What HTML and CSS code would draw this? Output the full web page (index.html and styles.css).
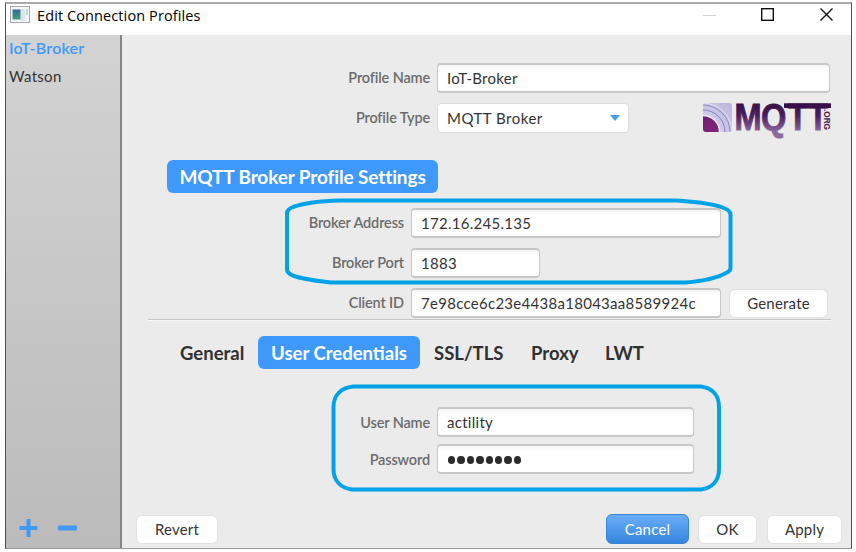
FILE: index.html
```html
<!DOCTYPE html>
<html lang="en">
<head>
<meta charset="utf-8">
<title>Edit Connection Profiles</title>
<link rel="stylesheet" href="styles.css">
</head>
<body>
<div class="window">
  <header class="titlebar">
    <svg class="app-icon" width="20" height="17" viewBox="0 0 20 17">
      <defs><linearGradient id="pane" x1="0" y1="0" x2="0" y2="1"><stop offset="0" stop-color="#35679c"/><stop offset="1" stop-color="#43a079"/></linearGradient></defs>
      <rect x=".5" y=".5" width="19" height="16" fill="#f3f5f7" stroke="#a5a9ad"/>
      <rect x="2.5" y="3.5" width="8" height="10" fill="url(#pane)"/>
      <rect x="11" y="3" width="4" height="12" fill="#dce3ec"/>
      <rect x="16" y="3" width="2" height="6" fill="#b8dbcf"/>
    </svg>
    <h1 class="title">Edit Connection Profiles</h1>
    <svg class="controls" width="132" height="16" viewBox="0 0 132 16" fill="none">
      <path d="M0 8.500h13" stroke="#d2d2d2"/>
      <rect x="58.700" y="1.700" width="11.600" height="11.600" stroke="#111" stroke-width="1.400"/>
      <path d="M117.500 1.500l12 12m0-12l-12 12" stroke="#111" stroke-width="1.400"/>
    </svg>
  </header>
  <div class="body">
    <aside class="sidebar">
      <div class="profile selected">IoT-Broker</div>
      <div class="profile watson">Watson</div>
      <svg class="tools" width="60" height="20" viewBox="0 0 60 20" fill="#3f98fa">
        <path d="M7.500 1h4v7h7v4h-7v7h-4v-7h-7v-4h7z"/><rect x="39" y="7.500" width="19" height="5" rx="1"/>
      </svg>
    </aside>
    <main class="pane">
      <div class="row name-row"><label class="label">Profile Name</label><div class="field">IoT-Broker</div></div>
      <div class="row type-row"><label class="label">Profile Type</label><div class="select"><span class="broker-type">MQTT Broker</span><i class="caret"></i></div>
        <svg class="logo" width="130" height="33" viewBox="0 0 130 33">
          <defs>
            <linearGradient id="ink" gradientUnits="userSpaceOnUse" x1="0" y1="2" x2="0" y2="31"><stop offset="0" stop-color="#361047"/><stop offset=".45" stop-color="#4b1e60"/><stop offset="1" stop-color="#8c6aa0"/></linearGradient>
            <linearGradient id="tile" x1="1" y1="0" x2="0" y2="1"><stop offset="0" stop-color="#b9b6dc"/><stop offset="1" stop-color="#d9d6ed"/></linearGradient>
            <linearGradient id="core" x1="0" y1="0" x2="1" y2="1"><stop offset="0" stop-color="#671b6f"/><stop offset="1" stop-color="#8c2782"/></linearGradient>
            <clipPath id="tile-clip"><rect x="1" y="2" width="29" height="29" rx="3"/></clipPath>
          </defs>
          <g clip-path="url(#tile-clip)">
            <rect x="1" y="2" width="30" height="29" fill="url(#tile)"/>
            <g fill="none"><circle cx="1" cy="31" r="29" stroke="#e4e2f1"/><circle cx="1" cy="31" r="27" stroke="#8d8dc2"/>
            <circle cx="1" cy="31" r="22" stroke="#8080ba"/></g>
            <circle cx="1" cy="31" r="16.500" fill="url(#core)" stroke="#f0edf6" stroke-width="1.500"/>
          </g>
          <text class="logo-text" transform="scale(.88 1)" x="37 67.200 97.500 120.500" y="28.800" font-size="37" fill="url(#ink)" stroke="url(#ink)" stroke-width=".9">MQTT</text>
          <rect x="82" y="2.300" width="47" height="4.700" fill="#390f49"/>
          <text class="logo-org" transform="translate(121.500 8) rotate(90)" textLength="21" lengthAdjust="spacingAndGlyphs">.ORG</text>
        </svg>
      </div>
      <h2 class="banner"><span>MQTT Broker Profile Settings</span></h2>
      <section class="broker">
        <div class="row"><label class="label address">Broker Address</label><div class="field ip">172.16.245.135</div></div>
        <div class="row"><label class="label">Broker Port</label><div class="field short">1883</div></div>
        <div class="row"><label class="label client">Client ID</label><div class="field client-id">7e98cce6c23e4438a18043aa8589924c</div><div class="button generate">Generate</div></div>
      </section>
      <nav class="tabs">
        <span class="tab general">General</span><span class="tab active">User Credentials</span><span class="tab ssl">SSL/TLS</span><span class="tab proxy">Proxy</span><span class="tab lwt">LWT</span>
      </nav>
      <section class="credentials">
        <div class="row"><label class="label">User Name</label><div class="field user">actility</div></div>
        <div class="row"><label class="label">Password</label><div class="field"><span class="dots"><i></i><i></i><i></i><i></i><i></i><i></i><i></i><i></i></span></div></div>
      </section>
      <footer class="footer">
        <div class="button revert">Revert</div><div class="button cancel">Cancel</div><div class="button ok">OK</div><div class="button apply">Apply</div>
      </footer>
    </main>
  </div>
</div>
<svg class="marks" width="856" height="552" viewBox="0 0 856 552" fill="none" stroke="#00a2e8" stroke-width="4">
  <path d="M340 200.500H677C700 202 718 205 726 209Q730.500 211 730.500 215V268Q730.500 271 726 273C717 278 704 281 686 282.500H331C308 280 296 278 290 274Q287 272 287 270V212Q288 209 293 207C304 203 322 201 340 200.500Z"/>
  <path d="M353 386.500H701C712 388 719 395 719 407V469C719 481 712 488 701 489.500H352C341 488 333.500 481 333.500 469V407C333.500 395 341 388 353 386.500Z"/>
</svg>
</body>
</html>
```
FILE: styles.css
```css
* { box-sizing: border-box; }
body { margin: 0; width: 856px; height: 552px; padding: 2px 4px 3px 5px; background: #fff; font-family: Lato, "Open Sans", sans-serif; overflow: hidden; }
.window { height: 547px; display: flex; flex-direction: column; border: 1px solid #505050; border-top-color: #aaa; border-bottom-color: #999; border-top-width: 2px; white-space: nowrap; }
.titlebar { height: 31px; display: flex; align-items: flex-start; background: #fff; flex: none; padding: 3px 16px 0 4px; }
.app-icon { margin-top: -1px; }
.title { margin: -1px 0 0 7px; font: 400 14.5px/20px "Open Sans", "Noto Sans", sans-serif; letter-spacing: .1px; color: #000; }
.controls { margin-left: auto; }
.body { display: flex; flex: 1; min-height: 0; }
.sidebar { width: 116px; border-right: 2px solid #858585; background: linear-gradient(#d3d3d3, #bbb); display: flex; flex-direction: column; padding: 0 3px; flex: none; }
.profile { height: 28px; line-height: 27px; font-size: 15px; letter-spacing: .3px; color: #333; }
.selected { color: #409afa; font-weight: 600; font-size: 16px; line-height: 26px; letter-spacing: .2px; }
.tools { margin: auto 0 10px 10px; }
.pane { flex: 1; background: #ebebeb; display: flex; flex-direction: column; min-width: 0; }
.row { display: flex; align-items: flex-start; height: 40px; }
.label { width: 308px; text-align: right; font-size: 14.5px; line-height: 29px; font-weight: 600; color: #6c6c6c; margin-right: 7px; letter-spacing: -.15px; }
.field, .select { height: 30px; width: 393px; border: 2px solid #c7c7c7; border-width: 2px 1px; border-radius: 4px; background: linear-gradient(#f5f5f5, #fff 5px); color: #333; font-size: 15px; line-height: 27px; padding-left: 9px; letter-spacing: .28px; flex: none; }
.name-row { margin-top: 28px; }
.select { width: 192px; border: 1px solid #ddd; background: #fff; line-height: 29px; letter-spacing: .5px; display: flex; align-items: center; }
.caret { margin: 0 8px 0 auto; border: 5px solid transparent; border-top: 6px solid #429bf5; border-bottom: 0; }
.logo { margin: -2px 0 0 73px; overflow: visible; }
.logo-text { font-family: "Liberation Sans", sans-serif; font-weight: 700; }
.logo-org { font: 700 9.5px "Liberation Sans", sans-serif; fill: #482052; }
.banner { width: 271px; height: 33px; margin: 17px 0 0 45px; border-radius: 6px; background: #3f99fb; color: #fff; font-size: 19px; line-height: 34px; font-weight: 700; text-align: center; letter-spacing: -.12px; }
.broker { margin: 15px 20px 0 26px; height: 112px; border-bottom: 1px solid #c5c5c5; box-shadow: 0 1px #f8f8f8; }
.broker .label { width: 256px; }
.broker .field { width: 310px; }
.broker .short { width: 129px; }
.button { height: 29px; border: 1px solid #e1e1e1; border-radius: 6px; background: #fff; text-align: center; font-size: 15px; line-height: 27px; color: #333; letter-spacing: .2px; }
.generate { width: 99px; margin: 1px 0 0 8px; flex: none; }
.tabs { display: flex; margin: 16px 0 0 45px; height: 33px; line-height: 35px; font-size: 18.5px; font-weight: 700; letter-spacing: 0; color: #303030; }
.tab { width: 67px; margin-left: 13px; }
.general { width: 78px; }
.active { width: 162px; margin-left: 0; text-align: center; background: #3f99fb; color: #fff; border-radius: 6px; }
.ssl { margin-left: 14px; width: 84px; }
.proxy { width: 61px; }
.credentials { margin-top: 38px; }
.credentials .row { height: 37px; }
.credentials .label { line-height: 31px; }
.credentials .field { width: 257px; line-height: 27px; }
.dots { display: flex; gap: 2px; padding: 10px 0 0 1px; }
.dots i { width: 7.4px; height: 8px; border-radius: 50%; background: #2c2c2c; }
.footer { display: flex; margin: auto 9px 4px 14px; }
.revert { width: 82px; margin-right: auto; }
.cancel { width: 83px; height: 30px; margin: -1px 9px 0; border-color: #3a84d4; background: linear-gradient(#6aadf8, #3585de); color: #fff; line-height: 29px; }
.ok { width: 59px; }
.apply { width: 75px; margin-left: 10px; }
.marks { position: absolute; left: 0; top: 0; pointer-events: none; }
```
